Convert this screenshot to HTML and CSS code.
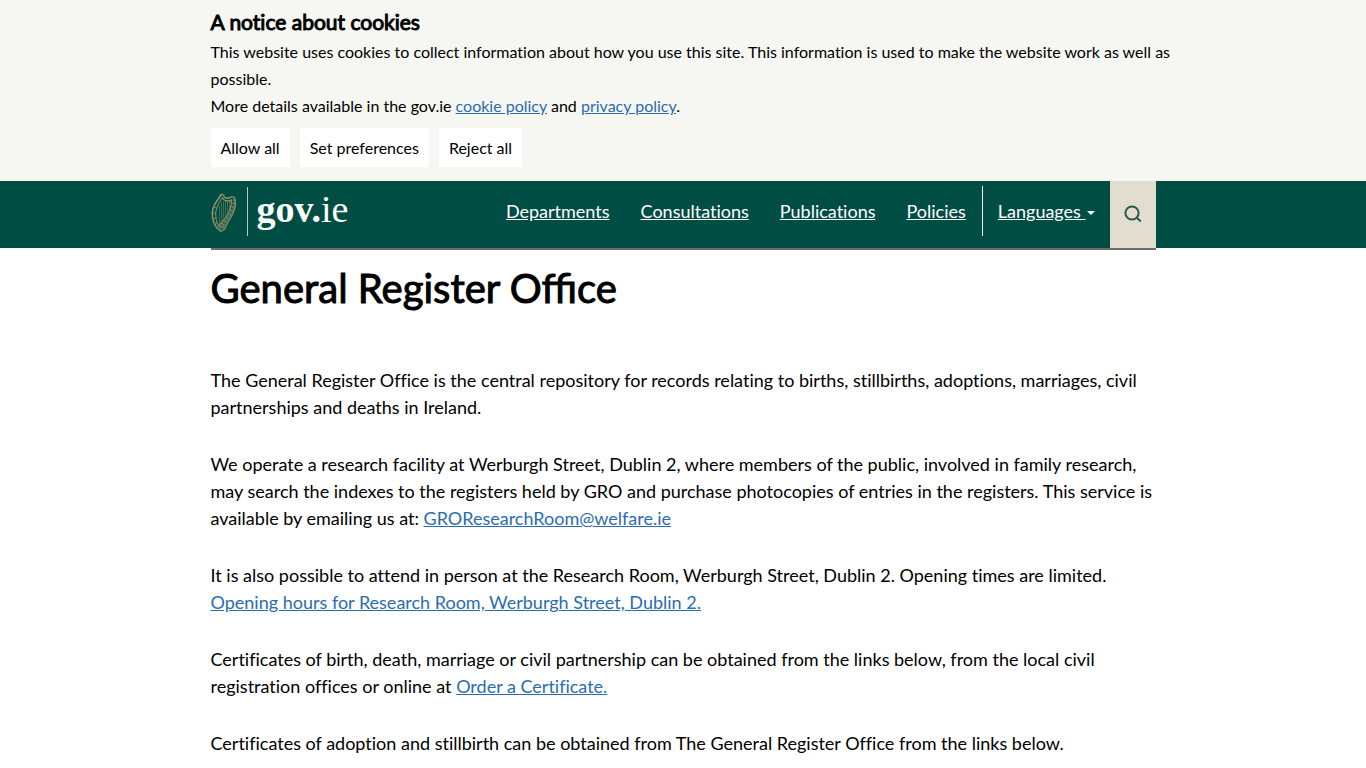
FILE: index.html
```html
<!DOCTYPE html>
<html lang="en">
<head>
    <meta charset="UTF-8">
    <meta name="viewport" content="width=device-width, initial-scale=1.0">
    <title>General Register Office</title>
    <link rel="stylesheet" href="styles.css">
</head>
<body>
    <section class="cookie-banner">
        <div class="container">
            <h2>A notice about cookies</h2>
            <p>This website uses cookies to collect information about how you use this site. This information is used to make the website work as well&nbsp;as <br>possible.</p>
            <p>More details available in the gov.ie <a href="#">cookie policy</a> and <a href="#">privacy policy</a>.</p>
            <div class="cookie-buttons">
                <button type="button">Allow all</button>
                <button type="button">Set preferences</button>
                <button type="button">Reject all</button>
            </div>
        </div>
    </section>

    <header class="site-header">
        <div class="container header-inner">
            <a class="logo" href="#" aria-label="gov.ie home">
                <svg class="harp" viewBox="0 0 26 40" width="26" height="40" fill="none" stroke="#8f9066" stroke-linecap="round" stroke-linejoin="round">
                    <path fill="#3d6b52" stroke="none" d="M22 6c1 6-2 12-6 18-3 4-6 7-9 10l2 3 4-1c2-5 4-8 6-11 4-6 6-12 5-18z"/>
                    <path stroke-width="1.600" d="M10 1.500C9 5 2.500 10 1.500 18c-.6 7 1 13 5 17.500"/>
                    <path stroke-width="1" d="M11.500 4.500C9.500 8 5.500 13 4.800 19c-.4 6 .7 10 2.700 14"/>
                    <path stroke-width="1.400" d="M9.500 3c-.5-1.500 2.500-2.500 3.200-.5C13 5 16 6 19 4.500c3-1.500 5.500 0 5 3M11.500 5c2 3.500 6 3.500 9.500 2"/>
                    <path stroke-width="1.200" d="M24.300 7c.7 6-1 12-4.500 17.500-2 3-4 6-6 11.500l-4 2.500-3-3M20.500 8c0 6-2 11-5 15.500-3 4-5.500 6-8 9.500"/>
                    <path stroke-width=".5" d="M8.500 13v17M10.500 10v17.500M12.500 9v16M14.500 9v13.500M16.500 9v10.500M18.500 8.500v8"/>
                    <path stroke-width=".8" d="M21 10l3 1M20 13.500l3.500 1M19 17l3.500 1.500M17 20.500l4 2M14.500 24l4 2.500M12 27l4 2.500M10 30l4 2.500M8 33l5 1.500M2.500 14l3 1M1.500 20h3M2 26l3-1M4 31l2-1"/>
                </svg>
                <span class="logo-text"><b>gov.</b>ie</span>
            </a>
            <nav class="main-nav" aria-label="Main">
                <a href="#">Departments</a>
                <a href="#">Consultations</a>
                <a href="#">Publications</a>
                <a href="#">Policies</a>
                <a class="languages" href="#">Languages <span class="caret"></span></a>
            </nav>
            <button class="search-button" type="button" aria-label="Search">
                <svg viewBox="0 0 18 18" width="18" height="18" fill="none" stroke="#26594b" stroke-width="2">
                    <circle cx="8" cy="8" r="6.600"/>
                    <path d="M12.800 12.800l4 3.700"/>
                </svg>
            </button>
        </div>
    </header>

    <main class="container">
        <h1>General Register Office</h1>
        <p>The General Register Office is the central repository for records relating to births, stillbirths, adoptions, marriages, civil partnerships and deaths in Ireland.</p>
        <p>We operate a research facility at Werburgh Street, Dublin 2, where members of the public, involved in family research, may search the indexes to the registers held by GRO and purchase photocopies of entries in the registers. This service is available by emailing us at: <a href="#">GROResearchRoom@welfare.ie</a></p>
        <p>It is also possible to attend in person at the Research Room, Werburgh Street, Dublin 2. Opening times are limited. <a href="#">Opening hours for Research Room, Werburgh Street, Dublin 2.</a></p>
        <p>Certificates of birth, death, marriage or civil partnership can be obtained from the links below, from the local civil registration offices or online at <a href="#">Order a Certificate.</a></p>
        <p>Certificates of adoption and stillbirth can be obtained from The General Register Office from the links below.</p>
    </main>
</body>
</html>
```
FILE: styles.css
```css
* {
    box-sizing: border-box;
}

body {
    margin: 0;
    font-family: Lato, sans-serif;
    font-size: 18px;
    font-variant-ligatures: none;
    line-height: 27px;
    color: #000;
    background-color: #fff;
}

a {
    color: #2b6cb0;
}

h1, h2 {
    margin: 0;
    font-weight: 400;
}

.container {
    width: 100%;
    max-width: 945px;
    margin: 0 auto;
}

/* Cookie notice */
.cookie-banner {
    padding: 8px 0 14px;
    background-color: #f6f7f2;
    font-size: 16px;
}

.cookie-banner h2 {
    margin-bottom: 3px;
    font-size: 21px;
    -webkit-text-stroke: 1px #000;
}

.cookie-banner p {
    margin: 0;
    white-space: nowrap;
}

.cookie-buttons {
    display: flex;
    gap: 10px;
    margin-top: 9px;
}

.cookie-buttons button {
    height: 39px;
    padding: 0 10px;
    border: none;
    background-color: #fff;
    color: #000;
    font-family: inherit;
    font-size: 16px;
    cursor: pointer;
}

/* Header */
.site-header {
    height: 67px;
    background-color: #004d44;
}

.header-inner {
    display: flex;
    height: 69px;
    border-bottom: 2px solid #736c69;
}

.logo {
    display: flex;
    align-items: flex-start;
    padding-top: 6px;
    color: #fff;
    text-decoration: none;
}

.harp {
    margin: 6px 10px 0 0;
}

.logo-text {
    height: 49px;
    padding-left: 9px;
    border-left: 1px solid #b3cac7;
    font-family: "Liberation Serif", serif;
    font-size: 38px;
    line-height: 44px;
}

.main-nav {
    display: flex;
    align-items: flex-start;
    gap: 1px;
    margin-left: auto;
    padding-top: 5px;
}

.main-nav a {
    padding: 0 15px;
    color: #fff;
    line-height: 50px;
}

.main-nav .languages {
    border-left: 1px solid #fff;
}

.caret {
    display: inline-block;
    margin-left: 1px;
    border-top: 4px solid #fff;
    border-right: 4px solid transparent;
    border-left: 4px solid transparent;
    vertical-align: middle;
}

.search-button {
    display: flex;
    align-items: center;
    justify-content: center;
    width: 46px;
    padding: 0 0 2px;
    border: none;
    background-color: #e3ddd0;
    cursor: pointer;
}

/* Content */
main h1 {
    margin: 15px 0 54px;
    font-size: 40px;
    font-variant-ligatures: normal;
    line-height: 50px;
    -webkit-text-stroke: 1px #000;
}

main p {
    margin: 0 0 30px;
}
```
